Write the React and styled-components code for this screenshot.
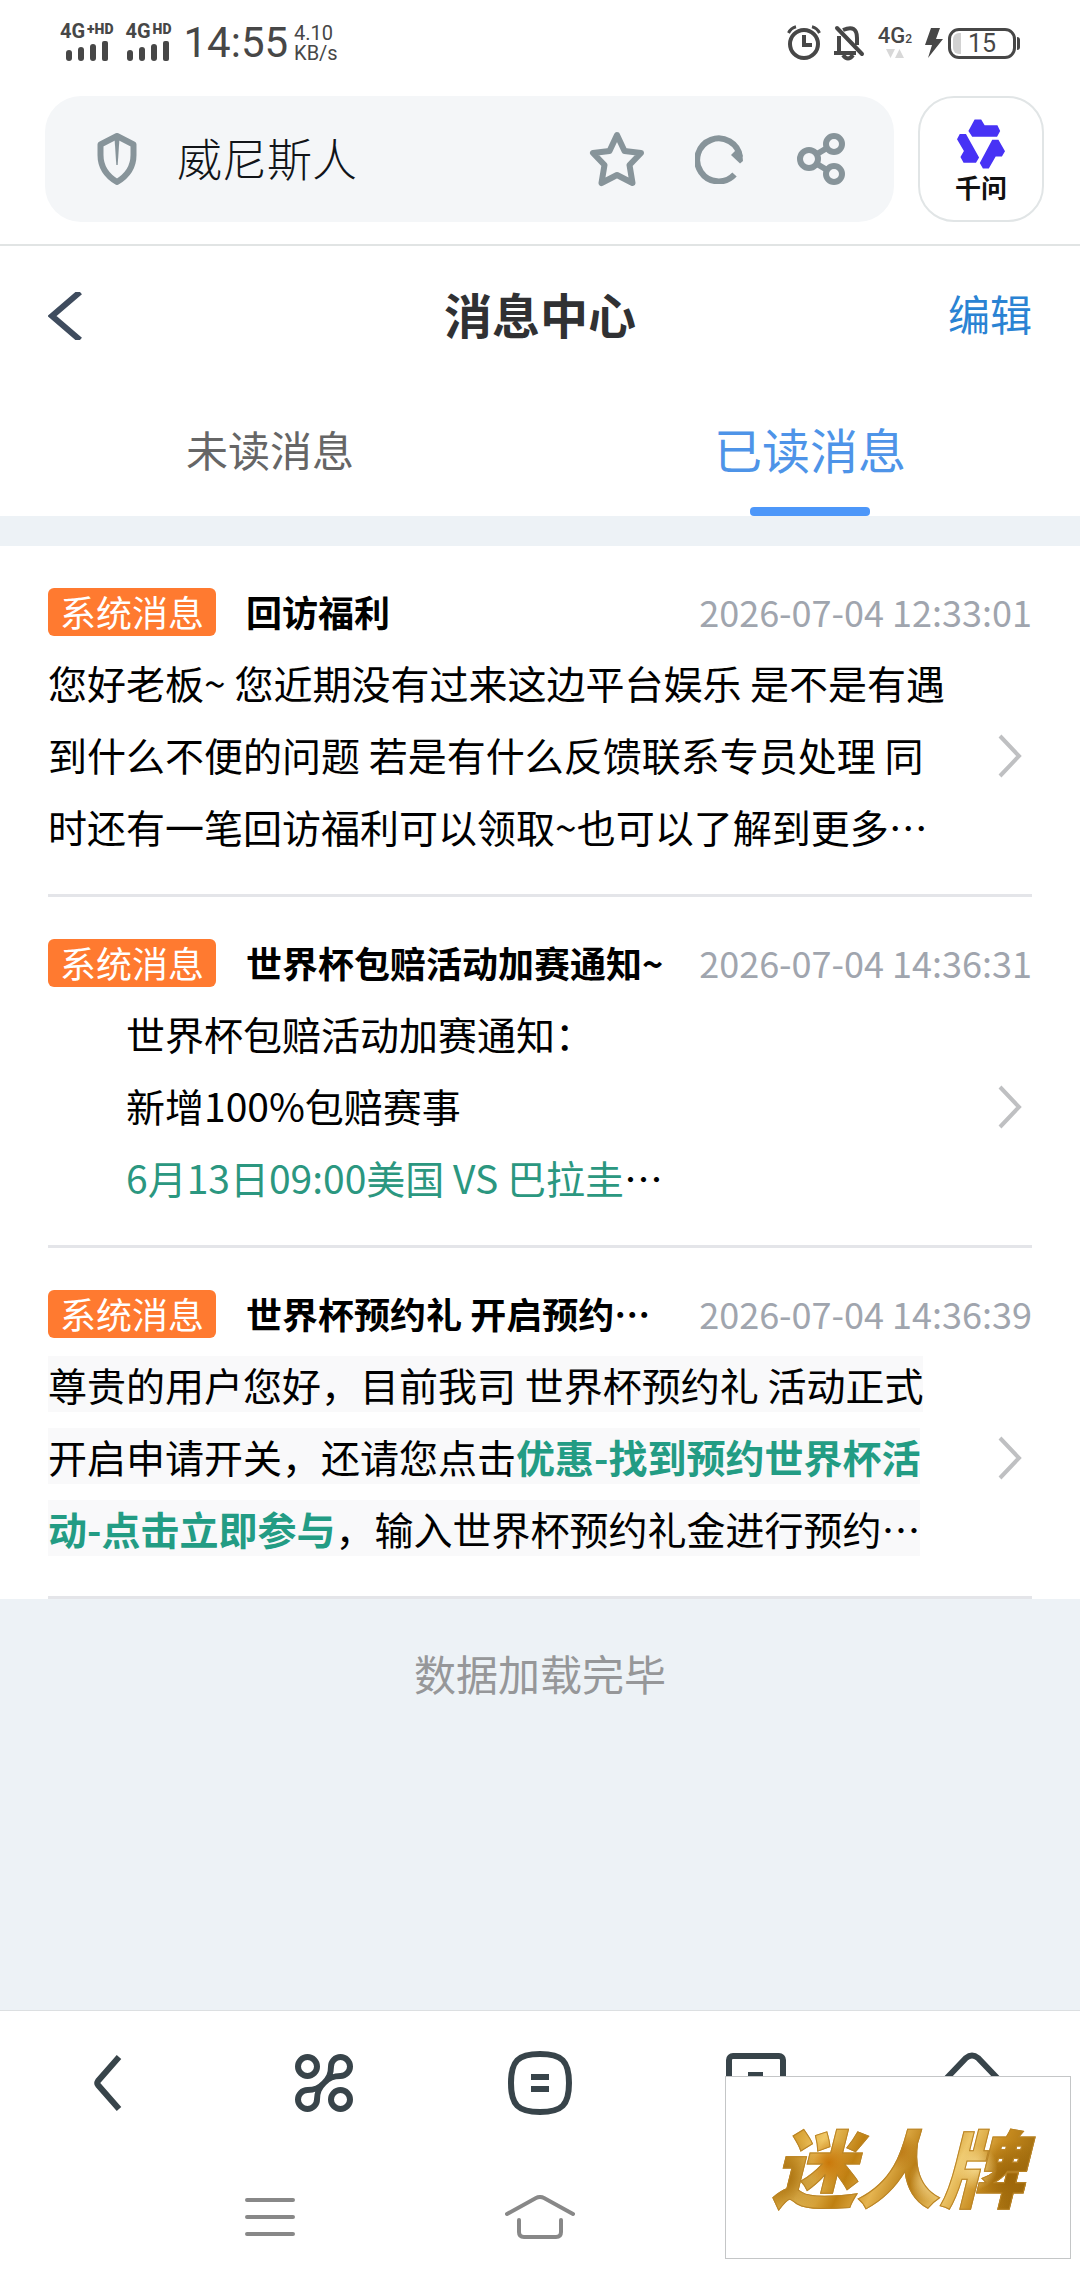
import React, { useState } from "react";
import styled, { createGlobalStyle } from "styled-components";

const GlobalStyle = createGlobalStyle`
  * {
    box-sizing: border-box;
  }

  body {
    margin: 0;
    background-color: #edf2f6;
    font-family: "Noto Sans CJK SC", "Noto Sans", sans-serif;
    color: #000;
  }

  button,
  input {
    padding: 0;
    border: none;
    background: none;
    font-family: inherit;
    color: inherit;
  }

  button {
    cursor: pointer;
  }

  svg {
    display: block;
  }
`;

const Page = styled.div`
  display: flex;
  flex-direction: column;
  min-height: 100vh;
`;

const StatusBar = styled.div`
  display: flex;
  align-items: center;
  justify-content: space-between;
  height: 86px;
  padding: 0 60px;
  background-color: white;
  color: #474747;
  font-family: Roboto, sans-serif;
`;

const StatusGroup = styled.div`
  display: flex;
  align-items: center;
  gap: ${({ $gap }) => $gap}px;
`;

const Signal = styled.div`
  display: flex;
  flex-direction: column;
  align-items: center;
  gap: 1px;
  padding-bottom: 4px;
`;

const SignalLabel = styled.div`
  display: flex;
  gap: ${({ $large }) => ($large ? 0 : 2)}px;
  font-size: ${({ $large }) => ($large ? 22 : 20)}px;
  font-weight: ${({ $large }) => ($large ? 500 : 700)};
  line-height: 18px;
`;

const SignalSup = styled.span`
  font-size: 14px;
  font-weight: 900;
  line-height: 14px;
`;

const Clock = styled.span`
  font-size: 42px;
  line-height: 48px;
`;

const Rate = styled.div`
  display: flex;
  flex-direction: column;
  margin-left: -6px;
  font-size: 20px;
  line-height: 20px;
`;

const Network = styled.div`
  display: flex;
  flex-direction: column;
  align-items: center;
  gap: 4px;
  padding-bottom: 2px;
`;

const Sub = styled.span`
  align-self: flex-end;
  font-size: 12px;
  line-height: 12px;
`;

const Power = styled.div`
  display: flex;
  align-items: center;
  gap: 5px;
`;

const Battery = styled.div`
  position: relative;
  display: flex;
  align-items: center;
  justify-content: center;
  width: 68px;
  height: 31px;
  margin-right: 4px;
  border: 3px solid #474747;
  border-radius: 11px;
  font-size: 25px;
  line-height: 25px;

  &::before {
    content: "";
    position: absolute;
    left: 2px;
    top: 2px;
    bottom: 2px;
    width: 8px;
    border-radius: 6px 0 0 6px;
    background-color: #d2d2d2;
  }

  &::after {
    content: "";
    position: absolute;
    right: -7px;
    top: 6px;
    width: 3px;
    height: 13px;
    border-radius: 0 4px 4px 0;
    background-color: #474747;
  }
`;

const BrowserBar = styled.div`
  display: flex;
  gap: 24px;
  padding: 10px 36px 22px 45px;
  border-bottom: 2px solid #e1e4e4;
  background-color: white;
`;

const AddressBox = styled.div`
  flex: 1;
  display: flex;
  align-items: center;
  min-width: 0;
  height: 126px;
  padding: 0 43px 0 52px;
  border-radius: 36px;
  background-color: #f4f6f8;
  color: #87949a;
`;

const Address = styled.input`
  flex: 1;
  min-width: 0;
  height: 72px;
  margin-left: 40px;
  padding-bottom: 4px;
  outline: none;
  font-size: 45px;
  font-weight: 300;
  color: #111418;
`;

const AddressActions = styled.div`
  display: flex;
  gap: 42px;
`;

const IconButton = styled.button`
  display: flex;
  align-items: center;
  justify-content: center;
  width: 60px;
  height: 60px;
`;

const Assistant = styled.button`
  display: flex;
  flex-direction: column;
  align-items: center;
  justify-content: center;
  width: 126px;
  height: 126px;
  padding-top: 6px;
  border: 2px solid #e1e5e6;
  border-radius: 36px;
  font-size: 26px;
  font-weight: 700;
  line-height: 36px;
  color: #111;
`;

const Header = styled.header`
  display: grid;
  grid-template-columns: 1fr auto 1fr;
  align-items: center;
  height: 140px;
  padding: 0 48px;
  background-color: white;
`;

const BackButton = styled.button`
  justify-self: start;
`;

const PageTitle = styled.h1`
  margin: 0;
  padding-bottom: 6px;
  font-size: 48px;
  font-weight: 700;
  line-height: 72px;
  color: #303133;
`;

const EditButton = styled.button`
  justify-self: end;
  padding-bottom: 6px;
  font-size: 42px;
  line-height: 72px;
  color: #2a83d3;
`;

const Tabs = styled.div`
  display: flex;
  height: 130px;
  background-color: white;
`;

const Tab = styled.button`
  position: relative;
  flex: 1;
  padding-bottom: 6px;
  font-size: ${({ $active }) => ($active ? 48 : 42)}px;
  color: ${({ $active }) => ($active ? "#4e94e8" : "#666")};

  &::after {
    content: "";
    display: ${({ $active }) => ($active ? "block" : "none")};
    position: absolute;
    left: calc(50% - 60px);
    bottom: 0;
    width: 120px;
    height: 9px;
    border-radius: 4px;
    background-color: #4d97f9;
  }
`;

const Content = styled.main`
  flex: 1;
  padding-top: 30px;
`;

const MessageList = styled.ul`
  margin: 0;
  padding: 0 48px;
  list-style: none;
  background-color: white;
`;

const Message = styled.li`
  padding: 30px 0;
  border-bottom: 3px solid #e4e5e9;
`;

const MessageTop = styled.div`
  display: flex;
  align-items: center;
  height: 72px;
  font-size: 36px;
  line-height: 54px;
`;

const Tag = styled.span`
  padding: 0 12px 2px;
  border-radius: 6px;
  background-color: #ff7a30;
  line-height: 46px;
  color: white;
`;

const MessageTitle = styled.h2`
  flex: 1;
  min-width: 0;
  margin: 0 0 0 30px;
  padding-bottom: 2px;
  white-space: nowrap;
  font-size: 36px;
  font-weight: 700;
`;

const Time = styled.time`
  padding-bottom: 2px;
  color: #a0a5ae;
`;

const MessageBody = styled.div`
  display: flex;
  align-items: center;
`;

const MessageText = styled.div`
  flex: 1;
  margin: -2px 0 2px;
  padding-left: ${({ $indent }) => ($indent ? 78 : 0)}px;
  font-size: 39px;
  line-height: 72px;
`;

const OpenButton = styled.button`
  display: flex;
  justify-content: flex-end;
  width: 84px;
  padding-right: 10px;
`;

const Line = styled.p`
  margin: 0;
`;

const Shade = styled.span`
  background-color: #f9f9fa;
`;

const Green = styled.span`
  color: #2b9780;
`;

const GreenStrong = styled.strong`
  color: #239c84;
`;

const Done = styled.p`
  margin: 0;
  padding: 38px 0;
  font-size: 42px;
  line-height: 72px;
  text-align: center;
  color: #969799;
`;

const ToolBar = styled.nav`
  display: grid;
  grid-template-columns: repeat(5, 1fr);
  height: 144px;
  border-top: 1px solid #dcdfe1;
  background-color: white;
  color: #38444a;
`;

const SystemBar = styled.nav`
  display: grid;
  grid-template-columns: repeat(3, 1fr);
  height: 126px;
  padding: 0 12.5%;
  background-color: white;
  color: #888;
`;

const BarButton = styled.button`
  display: flex;
  align-items: center;
  justify-content: center;
`;

const Watermark = styled.div`
  position: fixed;
  right: 9px;
  bottom: 21px;
  display: flex;
  align-items: center;
  justify-content: center;
  width: 346px;
  height: 183px;
  padding-bottom: 6px;
  border: 1px solid #c4c6c7;
  background-color: white;
`;

const WatermarkText = styled.span`
  padding: 0 12px;
  font-size: 84px;
  font-weight: 900;
  font-style: italic;
  line-height: 122px;
  color: transparent;
  background:
    radial-gradient(circle at 62% 62%, #f8dc94 0, transparent 12%),
    radial-gradient(circle at 25% 48%, #c9780a 0, transparent 11%),
    radial-gradient(circle at 78% 52%, #f6d98c 0, transparent 10%),
    radial-gradient(circle at 50% 38%, #b87410 0, transparent 12%),
    radial-gradient(circle at 90% 60%, #9c6508 0, transparent 14%),
    radial-gradient(circle at 8% 60%, #a46a08 0, transparent 16%),
    linear-gradient(
      115deg,
      #b0780f 0%,
      #d39a2a 14%,
      #f0c866 24%,
      #bf8012 36%,
      #e5b450 46%,
      #b5780f 56%,
      #eec76a 68%,
      #c88c20 78%,
      #a06c0e 90%,
      #d09a35 100%
    );
  background-clip: text;
  -webkit-background-clip: text;
  -webkit-text-stroke: 1px #b98325;
`;

const SignalBars = () => (
  <svg width="42" height="20" fill="currentColor">
    <rect x="0" y="9" width="6" height="11" rx="3" />
    <rect x="12" y="6" width="6" height="14" rx="3" />
    <rect x="24" y="3" width="6" height="17" rx="3" />
    <rect x="36" y="0" width="6" height="20" rx="2" />
  </svg>
);

const AlarmIcon = () => (
  <svg width="34" height="36" viewBox="0 0 34 36" fill="none" stroke="currentColor" strokeWidth="4">
    <circle cx="17" cy="19" r="14" />
    <path d="M17 10v10h8" />
    <path d="M1.500 8Q4 3 9 1.800M32.500 8Q30 3 25 1.800" strokeWidth="3" />
  </svg>
);

const MutedIcon = () => (
  <svg width="31" height="36" viewBox="0 0 31 36" fill="none" stroke="currentColor" strokeWidth="4">
    <path d="M0 28h22M5 28V11M9 5Q23-1 23 13v7" />
    <path d="M9 30q5 7 10 0" />
    <path d="M3 3l25 26" strokeLinecap="round" />
  </svg>
);

const ShieldIcon = () => (
  <svg width="40" height="52" viewBox="0 0 40 52">
    <path
      d="M20 3L36.500 11.500V22C36.500 35 30 43 20 49C10 43 3.500 35 3.500 22V11.500Z"
      fill="none"
      stroke="currentColor"
      strokeWidth="6"
      strokeLinejoin="round"
    />
    <path d="M17.500 5h5L20.700 32h-1.400z" fill="currentColor" />
  </svg>
);

const StarIcon = () => (
  <svg width="56" height="56" viewBox="0 0 56 56" fill="none">
    <path
      d="M28 4L35.500 20L52 22L40.500 34L43.500 52L28 44L12.500 52L15.500 34L4 22L20.500 20Z"
      stroke="currentColor"
      strokeWidth="6"
      strokeLinejoin="round"
    />
  </svg>
);

const RefreshIcon = () => (
  <svg width="49" height="49" viewBox="0 0 49 49">
    <path
      d="M39.500 39.500A21.500 21.500 0 1 1 45 22"
      fill="none"
      stroke="currentColor"
      strokeWidth="6"
    />
    <path d="M36 20L41 15L46 16Q48 21 48 26L45 28.500Z" fill="currentColor" />
  </svg>
);

const ShareIcon = () => (
  <svg width="49" height="52" viewBox="0 0 49 52" fill="none" stroke="currentColor" strokeWidth="6">
    <circle cx="12" cy="26" r="9" />
    <circle cx="37" cy="11" r="8" />
    <circle cx="37" cy="41" r="8" />
    <path d="M20 21L30 15M20 31L30 37" />
  </svg>
);

const AssistantLogo = () => (
  <svg width="48" height="50" viewBox="0 0 139 144" fill="#4732f5">
    <path d="M33 34L51 1H70L80 18H117L125 34L116 51H44Z" />
    <path d="M0 58L8 43H26L64 111L55 126H19L10 110L20 92Z" />
    <path d="M66 127L102 60H120L139 93L130 108H112L92 143H75Z" />
  </svg>
);

const ChevronRight = () => (
  <svg width="24" height="44" viewBox="0 0 24 44" fill="none">
    <path d="M2 2L21 22L2 42" stroke="#bfc0c2" strokeWidth="4" />
  </svg>
);

const CommandIcon = () => (
  <svg width="58" height="58" viewBox="0 0 58 58" fill="none" stroke="currentColor" strokeWidth="6">
    <circle cx="12.500" cy="12.500" r="9.500" />
    <circle cx="45.500" cy="45.500" r="9.500" />
    <path d="M29 29C34 24 36 20 36 12.500A9.500 9.500 0 1 1 45.500 22C38 22 34 24 29 29C24 34 22 38 22 45.500A9.500 9.500 0 1 1 12.500 36C20 36 24 34 29 29Z" />
  </svg>
);

const messages = [
  {
    id: 1,
    title: "回访福利",
    time: "2026-07-04 12:33:01",
    body: "您好老板~ 您近期没有过来这边平台娱乐 是不是有遇到什么不便的问题 若是有什么反馈联系专员处理 同时还有一笔回访福利可以领取~也可以了解到更多…",
  },
  {
    id: 2,
    title: "世界杯包赔活动加赛通知~",
    time: "2026-07-04 14:36:31",
    indent: true,
    body: (
      <>
        <Line>世界杯包赔活动加赛通知：</Line>
        <Line>新增100%包赔赛事</Line>
        <Line>
          <Green>6月13日09:00美国 VS 巴拉圭</Green>…
        </Line>
      </>
    ),
  },
  {
    id: 3,
    title: "世界杯预约礼 开启预约…",
    time: "2026-07-04 14:36:39",
    body: (
      <Shade>
        尊贵的用户您好，目前我司 世界杯预约礼 活动正式开启申请开关，还请您点击
        <GreenStrong>优惠-找到预约世界杯活动-点击立即参与</GreenStrong>
        ，输入世界杯预约礼金进行预约…
      </Shade>
    ),
  },
];

const App = () => {
  const [active, setActive] = useState("read");

  return (
    <Page lang="zh-CN">
      <GlobalStyle />
      <StatusBar>
        <StatusGroup $gap={12}>
          <Signal>
            <SignalLabel>
              4G<SignalSup>+HD</SignalSup>
            </SignalLabel>
            <SignalBars />
          </Signal>
          <Signal>
            <SignalLabel>
              4G<SignalSup>HD</SignalSup>
            </SignalLabel>
            <SignalBars />
          </Signal>
          <Clock>14:55</Clock>
          <Rate>
            <span>4.10</span>
            <span>KB/s</span>
          </Rate>
        </StatusGroup>
        <StatusGroup $gap={13}>
          <AlarmIcon />
          <MutedIcon />
          <Network>
            <SignalLabel $large>
              4G<Sub>2</Sub>
            </SignalLabel>
            <svg width="18" height="9" fill="#d8d8d8">
              <path d="M0 0h9l-4.500 9zM9 9h9l-4.500-9z" />
            </svg>
          </Network>
          <Power>
            <svg width="18" height="30" fill="currentColor">
              <path d="M6 0H15L11 11H18L3 30L7 17H0Z" />
            </svg>
            <Battery>15</Battery>
          </Power>
        </StatusGroup>
      </StatusBar>

      <BrowserBar>
        <AddressBox>
          <ShieldIcon />
          <Address aria-label="地址栏" defaultValue="威尼斯人" />
          <AddressActions>
            <IconButton aria-label="收藏">
              <StarIcon />
            </IconButton>
            <IconButton aria-label="刷新">
              <RefreshIcon />
            </IconButton>
            <IconButton aria-label="分享">
              <ShareIcon />
            </IconButton>
          </AddressActions>
        </AddressBox>
        <Assistant>
          <AssistantLogo />
          千问
        </Assistant>
      </BrowserBar>

      <Header>
        <BackButton aria-label="返回">
          <svg width="35" height="48" viewBox="0 0 35 48" fill="none">
            <path d="M32 0L4 24L32 48" stroke="#3f4c5e" strokeWidth="6" />
          </svg>
        </BackButton>
        <PageTitle>消息中心</PageTitle>
        <EditButton>编辑</EditButton>
      </Header>

      <Tabs role="tablist">
        <Tab
          role="tab"
          aria-selected={active === "unread"}
          $active={active === "unread"}
          onClick={() => setActive("unread")}
        >
          未读消息
        </Tab>
        <Tab
          role="tab"
          aria-selected={active === "read"}
          $active={active === "read"}
          onClick={() => setActive("read")}
        >
          已读消息
        </Tab>
      </Tabs>

      <Content>
        <MessageList>
          {messages.map((message) => (
            <Message key={message.id}>
              <MessageTop>
                <Tag>系统消息</Tag>
                <MessageTitle>{message.title}</MessageTitle>
                <Time>{message.time}</Time>
              </MessageTop>
              <MessageBody>
                <MessageText $indent={message.indent}>{message.body}</MessageText>
                <OpenButton aria-label="查看">
                  <ChevronRight />
                </OpenButton>
              </MessageBody>
            </Message>
          ))}
        </MessageList>
        <Done>数据加载完毕</Done>
      </Content>

      <ToolBar>
        <BarButton aria-label="后退">
          <svg width="28" height="58" viewBox="0 0 28 58" fill="none">
            <path d="M25 3L4 27Q2.500 29 4 31L25 55" stroke="currentColor" strokeWidth="6" />
          </svg>
        </BarButton>
        <BarButton aria-label="发现">
          <CommandIcon />
        </BarButton>
        <BarButton aria-label="菜单">
          <svg width="64" height="64" viewBox="0 0 64 64" fill="none" stroke="currentColor" strokeWidth="6">
            <path d="M32 3C54 3 61 10 61 32S54 61 32 61S3 54 3 32S10 3 32 3Z" />
            <path d="M23 26h18M23 38h18" />
          </svg>
        </BarButton>
        <BarButton aria-label="窗口">
          <svg width="60" height="60" viewBox="0 0 60 60" fill="none" stroke="currentColor" strokeWidth="6">
            <rect x="3" y="3" width="54" height="54" rx="4" />
            <path d="M22 22h12v20" />
          </svg>
        </BarButton>
        <BarButton aria-label="主页">
          <svg width="64" height="62" viewBox="0 0 64 62" fill="none" stroke="currentColor" strokeWidth="6">
            <path d="M3 30L26 6Q32 1 38 6L61 30M11 24V58H53V24" />
          </svg>
        </BarButton>
      </ToolBar>
      <SystemBar>
        <BarButton aria-label="最近任务">
          <svg width="50" height="38" viewBox="0 0 50 38" stroke="currentColor" strokeWidth="4" strokeLinecap="round">
            <path d="M2 2h46M2 19h46M2 36h46" />
          </svg>
        </BarButton>
        <BarButton aria-label="桌面">
          <svg
            width="70"
            height="44"
            viewBox="0 0 70 44"
            fill="none"
            stroke="currentColor"
            strokeWidth="4"
            strokeLinecap="round"
          >
            <path d="M2 19L31 3Q35 1 39 3L68 19M14 25V37Q14 42 19 42H51Q56 42 56 37V25" />
          </svg>
        </BarButton>
        <BarButton aria-label="返回上一级">
          <svg width="28" height="44" viewBox="0 0 28 44" fill="none" stroke="currentColor" strokeWidth="4">
            <path d="M25 2L4 22L25 42" />
          </svg>
        </BarButton>
      </SystemBar>

      <Watermark>
        <WatermarkText>迷人牌</WatermarkText>
      </Watermark>
    </Page>
  );
};

export default App;
